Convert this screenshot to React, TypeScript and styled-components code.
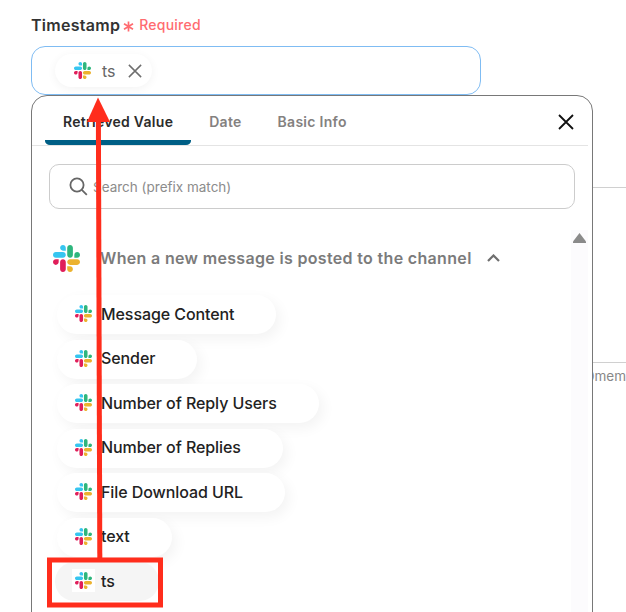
import React from 'react';
import styled, { createGlobalStyle } from 'styled-components';

const GlobalStyle = createGlobalStyle`
    html, body {
        margin: 0;
        height: 100%;
        overflow: hidden;
        background: #ffffff;
    }
    body {
        font-family: 'Inter', 'Liberation Sans', sans-serif;
    }
`;

const Page = styled.div`
    position: relative;
    width: 626px;
    height: 612px;
    overflow: hidden;
    padding: 15px 0 0 31px;
    box-sizing: border-box;
`;

const LabelRow = styled.div`
    display: flex;
    align-items: center;
    height: 20px;
    gap: 3px;
`;

const LabelText = styled.span`
    font-size: 16px;
    font-weight: 600;
    color: #333333;
    letter-spacing: 0.27px;
`;

const Required = styled.span`
    display: flex;
    align-items: center;
    gap: 5px;
    padding-bottom: 2px;
    font-size: 14px;
    font-weight: 500;
    color: #ff6b70;
    letter-spacing: 0.25px;
`;

const ValueBox = styled.div`
    margin-top: 11px;
    width: 450px;
    height: 49px;
    box-sizing: border-box;
    border: 1px solid #7fbcf3;
    border-bottom-width: 1.5px;
    border-radius: 14px;
    padding: 7px 23px;
    display: flex;
    background: #ffffff;
`;

const ValueChip = styled.div`
    display: flex;
    align-items: center;
    height: 33px;
    padding: 0 10px 0 19px;
    gap: 11px;
    border-radius: 17px;
    background: #ffffff;
    box-shadow: 0 2px 10px rgba(0, 0, 0, 0.05);
    font-size: 16px;
    color: #666666;
`;

const ChipClose = styled.span`
    display: flex;
    margin-left: 1px;
    color: #6e6e6e;
`;

const BehindRule = styled.div<{ $top: number }>`
    height: 1px;
    background: #d0d0d0;
    margin-top: ${(p) => p.$top}px;
    width: 595px;
`;

const BehindText = styled.div`
    margin: 5px 0 0 555px;
    font-size: 13.5px;
    line-height: 16px;
    color: #888888;
    white-space: nowrap;
`;

const Popover = styled.div`
    position: absolute;
    left: 31px;
    top: 95px;
    width: 562px;
    height: 560px;
    box-sizing: border-box;
    border: 1px solid #787878;
    border-radius: 16px;
    background: #ffffff;
`;

const TabBar = styled.div`
    position: relative;
    display: flex;
    height: 49px;
    margin: 0 4px 0 0;
    padding-left: 13px;
    border-bottom: 1px solid #e4e4e4;
`;

const Tab = styled.div<{ $active?: boolean }>`
    display: flex;
    align-items: center;
    justify-content: center;
    box-sizing: border-box;
    height: 49px;
    padding: 6px 18px 0;
    font-size: 14px;
    font-weight: 600;
    letter-spacing: 0.28px;
    color: ${(p) => (p.$active ? '#2c2c2c' : '#84817f')};
    border-bottom: 5px solid ${(p) => (p.$active ? '#005f86' : 'transparent')};
    border-bottom-left-radius: 5px 4px;
    border-bottom-right-radius: 5px 4px;
`;

const CloseButton = styled.span`
    position: absolute;
    right: 14px;
    top: 18px;
    display: flex;
    color: #111111;
`;

const SearchBox = styled.div`
    display: flex;
    align-items: center;
    margin: 18px 0 0 17px;
    width: 526px;
    height: 45px;
    box-sizing: border-box;
    border: 1px solid #cccccc;
    border-radius: 10px;
    padding-left: 19px;
    color: #666666;
`;

const SearchText = styled.span`
    margin-left: 5px;
    font-size: 13.5px;
    color: #8c8c8c;
`;

const ListArea = styled.div`
    display: flex;
    margin-top: 21px;
`;

const List = styled.div`
    flex: 1;
    padding: 14px 0 0 21px;
`;

const SourceHeader = styled.div`
    display: flex;
    align-items: center;
    height: 28px;
    gap: 20px;
    margin-bottom: 23px;
    font-size: 16px;
    font-weight: 600;
    color: #7b7b7b;
    letter-spacing: 0.33px;
`;

const HeaderChevron = styled.span`
    display: flex;
    margin-left: -5px;
    color: #6f6f6f;
`;

const Items = styled.div`
    display: flex;
    flex-direction: column;
    align-items: flex-start;
    gap: 5.5px;
    margin-left: 4px;
`;

const Item = styled.div<{ $hover?: boolean }>`
    display: flex;
    align-items: center;
    box-sizing: border-box;
    height: 39px;
    padding: ${(p) => (p.$hover ? '0 44px 2px 20px' : '0 42px 2px 18px')};
    margin-left: ${(p) => (p.$hover ? '-2px' : '0')};
    gap: 9px;
    border-radius: 20px;
    font-size: 16px;
    font-weight: 500;
    letter-spacing: -0.08px;
    color: #222222;
    background: ${(p) => (p.$hover ? '#f5f5f5' : '#ffffff')};
    box-shadow: ${(p) => (p.$hover ? 'none' : '4px 5px 14px rgba(0, 0, 0, 0.05)')};
`;

const IconPlate = styled.span<{ $hover?: boolean }>`
    display: flex;
    padding: 3px;
    margin: 0 -3px;
    background: ${(p) => (p.$hover ? '#ffffff' : 'transparent')};
`;

const ScrollTrack = styled.div`
    width: 17px;
    height: 400px;
    margin-right: 4px;
    padding-top: 3px;
    background: #fcfbfd;
    color: #8a8a8a;
    display: flex;
    justify-content: center;
    align-items: flex-start;
`;

const Annotation = styled.svg`
    position: absolute;
    left: 0;
    top: 0;
    pointer-events: none;
`;

const SlackLogo: React.FC<{ size: number }> = ({ size }) => (
    <svg width={size} height={size} viewBox="0 0 122.8 122.8">
        <path
            fill="#e01e5a"
            d="M25.8 77.6c0 7.1-5.8 12.9-12.9 12.9S0 84.7 0 77.6s5.8-12.9 12.9-12.9h12.9v12.9zm6.5 0c0-7.1 5.8-12.9 12.9-12.9s12.9 5.8 12.9 12.9v32.3c0 7.1-5.8 12.9-12.9 12.9s-12.9-5.8-12.9-12.9V77.6z"
        />
        <path
            fill="#36c5f0"
            d="M45.2 25.8c-7.1 0-12.9-5.8-12.9-12.9S38.1 0 45.2 0s12.9 5.8 12.9 12.9v12.9H45.2zm0 6.5c7.1 0 12.9 5.8 12.9 12.9s-5.8 12.9-12.9 12.9H12.9C5.8 58.1 0 52.3 0 45.2s5.8-12.9 12.9-12.9h32.3z"
        />
        <path
            fill="#2eb67d"
            d="M97 45.2c0-7.1 5.8-12.9 12.9-12.9s12.9 5.8 12.9 12.9-5.8 12.9-12.9 12.9H97V45.2zm-6.5 0c0 7.1-5.8 12.9-12.9 12.9s-12.9-5.8-12.9-12.9V12.9C64.7 5.8 70.5 0 77.6 0s12.9 5.8 12.9 12.9v32.3z"
        />
        <path
            fill="#ecb22e"
            d="M77.6 97c7.1 0 12.9 5.8 12.9 12.9s-5.8 12.9-12.9 12.9-12.9-5.8-12.9-12.9V97h12.9zm0-6.5c-7.1 0-12.9-5.8-12.9-12.9s5.8-12.9 12.9-12.9h32.3c7.1 0 12.9 5.8 12.9 12.9s-5.8 12.9-12.9 12.9H77.6z"
        />
    </svg>
);

const Cross: React.FC<{ size: number; weight: number }> = ({ size, weight }) => (
    <svg width={size} height={size} viewBox="0 0 16 16" fill="none" stroke="currentColor" strokeWidth={weight}>
        <path d="M1 1l14 14M15 1L1 15" />
    </svg>
);

const fields = ['Message Content', 'Sender', 'Number of Reply Users', 'Number of Replies', 'File Download URL', 'text', 'ts'];

const App: React.FC = () => {
    return (
        <Page>
            <GlobalStyle />
            <LabelRow>
                <LabelText>Timestamp</LabelText>
                <Required>
                    <svg width="11" height="11" viewBox="0 0 11 11" fill="none" stroke="currentColor" strokeWidth="1.7" style={{ marginTop: 5 }}>
                        <path d="M5.5 0.5v10M1 2.8l9 5.4M10 2.8L1 8.2" />
                    </svg>
                    Required
                </Required>
            </LabelRow>
            <ValueBox>
                <ValueChip>
                    <SlackLogo size={17} />
                    <span>ts</span>
                    <ChipClose>
                        <Cross size={14} weight={1.7} />
                    </ChipClose>
                </ValueChip>
            </ValueBox>

            <BehindRule $top={92} />
            <BehindRule $top={174} />
            <BehindText>0mem</BehindText>

            <Popover>
                <TabBar>
                    <Tab $active>Retrieved Value</Tab>
                    <Tab>Date</Tab>
                    <Tab>Basic Info</Tab>
                    <CloseButton>
                        <Cross size={16} weight={1.8} />
                    </CloseButton>
                </TabBar>
                <SearchBox>
                    <svg width="19" height="19" viewBox="0 0 19 19" fill="none" stroke="currentColor" strokeWidth="1.8">
                        <circle cx="8" cy="8" r="6.6" />
                        <path d="M12.8 12.8l5 5" />
                    </svg>
                    <SearchText>Search (prefix match)</SearchText>
                </SearchBox>
                <ListArea>
                    <List>
                        <SourceHeader>
                            <SlackLogo size={27} />
                            <span>When a new message is posted to the channel</span>
                            <HeaderChevron>
                                <svg width="13" height="8" viewBox="0 0 13 8" fill="none" stroke="currentColor" strokeWidth="2.2">
                                    <path d="M1 7l5.5-5.5L12 7" />
                                </svg>
                            </HeaderChevron>
                        </SourceHeader>
                        <Items>
                            {fields.map((name) => (
                                <Item key={name} $hover={name === 'ts'}>
                                    <IconPlate $hover={name === 'ts'}>
                                        <SlackLogo size={17} />
                                    </IconPlate>
                                    {name}
                                </Item>
                            ))}
                        </Items>
                    </List>
                    <ScrollTrack>
                        <svg width="13" height="10" viewBox="0 0 13 10" fill="currentColor">
                            <path d="M6.5 0L13 8.5V10H0V8.5z" />
                        </svg>
                    </ScrollTrack>
                </ListArea>
            </Popover>

            <Annotation width="626" height="612" viewBox="0 0 626 612">
                <path d="M99.8 558L98.4 118" fill="none" stroke="#ff2d1c" strokeWidth="5" />
                <path d="M98 97.5L110 122H87z" fill="#ff2d1c" />
                <rect x="49.5" y="560" width="111" height="45" fill="none" stroke="#ff2d1c" strokeWidth="5" />
            </Annotation>
        </Page>
    );
};

export default App;
